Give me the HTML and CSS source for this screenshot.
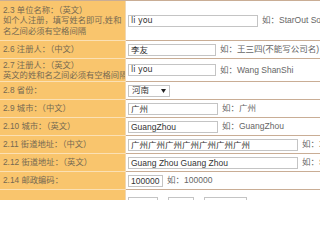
FILE: index.html
```html
<!DOCTYPE html>
<html lang="zh-CN">
<head>
<meta charset="utf-8">
<title>注册信息</title>
<link rel="stylesheet" href="styles.css">
</head>
<body>
<table class="form">
  <tr class="r40">
    <td class="lab">2.3 单位名称：（英文）<br>如个人注册，填写姓名即可,姓和<br>名之间必须有空格间隔</td>
    <td class="val"><span class="inp w130 alt">li you</span><span class="hint">如：StarOut Software</span></td>
  </tr>
  <tr class="r18">
    <td class="lab">2.6 注册人：（中文）</td>
    <td class="val"><span class="inp w88">李友</span><span class="hint">如：王三四(不能写公司名)</span></td>
  </tr>
  <tr class="r23">
    <td class="lab">2.7 注册人：（英文）<br>英文的姓和名之间必须有空格间隔</td>
    <td class="val"><span class="inp w88 alt">li you</span><span class="hint">如：Wang ShanShi</span></td>
  </tr>
  <tr class="r18">
    <td class="lab">2.8 省份：</td>
    <td class="val"><span class="sel">河南<svg class="arr" width="5" height="4" viewBox="0 0 5 4"><path d="M0 0H5L2.5 4Z" fill="#222"/></svg></span></td>
  </tr>
  <tr class="r18">
    <td class="lab">2.9 城市：（中文）</td>
    <td class="val"><span class="inp w90">广州</span><span class="hint">如：广州</span></td>
  </tr>
  <tr class="r18">
    <td class="lab">2.10 城市：（英文）</td>
    <td class="val"><span class="inp w90">GuangZhou</span><span class="hint">如：GuangZhou</span></td>
  </tr>
  <tr class="r18">
    <td class="lab">2.11 街道地址：（中文）</td>
    <td class="val"><span class="inp w170">广州广州广州广州广州广州广州</span><span class="hint">如：XX区XX路</span></td>
  </tr>
  <tr class="r18">
    <td class="lab">2.12 街道地址：（英文）</td>
    <td class="val"><span class="inp w170">Guang Zhou Guang Zhou</span><span class="hint">如：StarOut</span></td>
  </tr>
  <tr class="r18">
    <td class="lab">2.14 邮政编码：</td>
    <td class="val"><span class="inp w35">100000</span><span class="hint">如：100000</span></td>
  </tr>
  <tr class="r26">
    <td class="lab"></td>
    <td class="val"><span class="inp w30">86</span><span class="dash">-</span><span class="inp w26">010</span><span class="dash">-</span><span class="inp w43">3550066</span></td>
  </tr>
</table>
</body>
</html>
```

FILE: styles.css
```css
html, body {
  margin: 0;
  padding: 0;
  width: 320px;
  height: 200px;
  background: #ffffff;
  overflow: hidden;
}

.form {
  border-collapse: separate;
  border-spacing: 0;
  border-top: 1px solid #c9ad95;
  table-layout: fixed;
  width: 470px;
  font-family: "Liberation Sans", "Noto Sans CJK SC", sans-serif;
  font-size: 8.3px;
  line-height: 10.5px;
}

.form td {
  box-sizing: border-box;
  padding: 0;
  border-bottom: 1px solid #c9ad95;
  vertical-align: middle;
}

.lab {
  width: 126px;
  background: #f9c56d;
  color: #766a52;
  white-space: nowrap;
  overflow: hidden;
  padding-left: 3px !important;
  border-right: 1px solid #efd7b4;
  border-bottom-color: #fbe0b4 !important;
}

.val {
  width: 344px;
  padding-left: 2px !important;
  white-space: nowrap;
  color: #666666;
  font-size: 8.5px;
}

.r40 td { height: 40px; }
.r23 td { height: 23px; }
.r18 td { height: 18px; }
.r26 td { height: 26px; }

.inp {
  box-sizing: border-box;
  display: inline-block;
  height: 12px;
  margin: 0;
  padding: 0 2px;
  border: 1px solid #c4c4c4;
  background: #ffffff;
  font-size: 8.5px;
  line-height: 10px;
  color: #333333;
  vertical-align: middle;
  overflow: hidden;
}

.alt {
  font-family: "DejaVu Sans", "Noto Sans CJK SC", sans-serif;
  font-size: 8px;
}

.w130 { width: 130px; }
.w88 { width: 88px; }
.w90 { width: 90px; }
.w170 { width: 170px; }
.w35 { width: 35px; }
.w30 { width: 30px; }
.w26 { width: 26px; }
.w43 { width: 43px; }

.hint {
  margin-left: 4px;
  vertical-align: middle;
  color: #666666;
}

.dash {
  display: inline-block;
  width: 10px;
  text-align: center;
  vertical-align: middle;
  color: #555555;
}

.sel {
  box-sizing: border-box;
  display: inline-flex;
  align-items: center;
  justify-content: space-between;
  width: 42px;
  height: 12px;
  padding: 0 3px;
  border: 1px solid #c4c4c4;
  background: #ffffff;
  color: #333333;
  vertical-align: middle;
}

.arr { display: block; }
```
